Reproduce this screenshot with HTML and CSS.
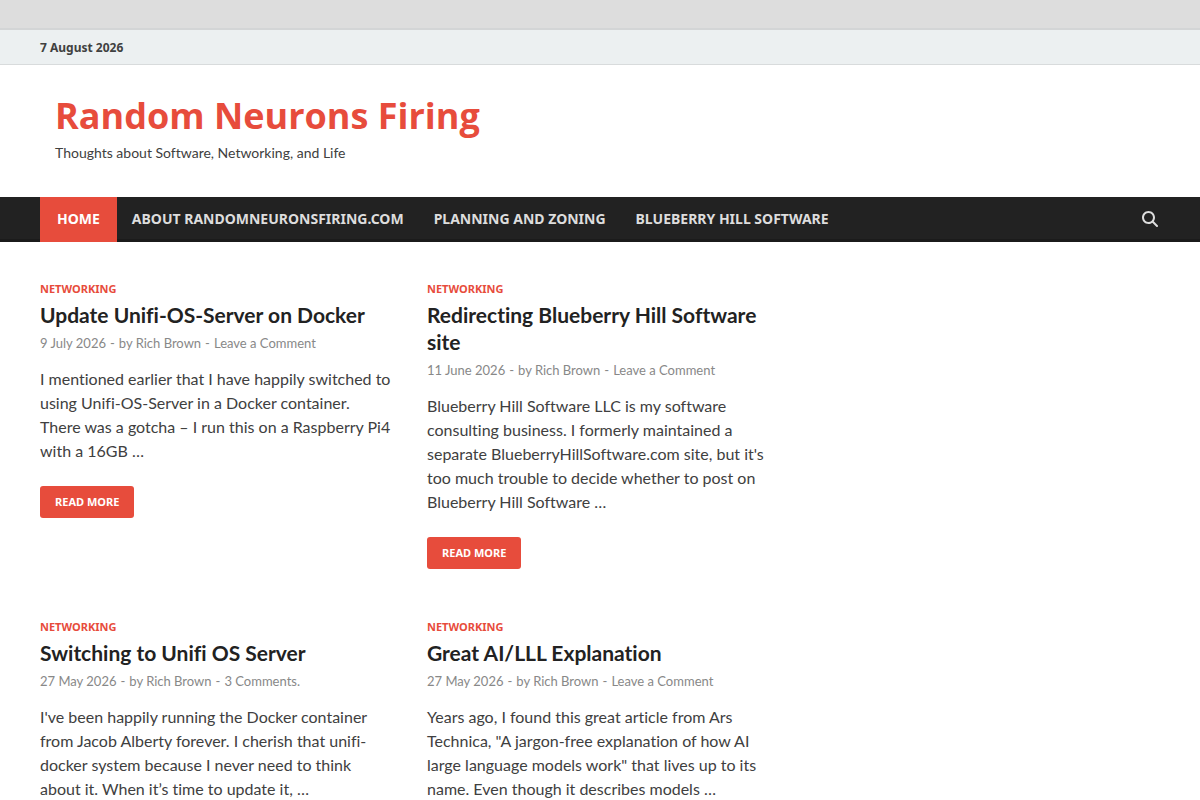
FILE: index.html
```html
<!DOCTYPE html>
<html lang="en">
<head>
<meta charset="utf-8">
<meta name="viewport" content="width=device-width, initial-scale=1">
<title>Random Neurons Firing</title>
<link rel="stylesheet" href="styles.css">
</head>
<body>
<div class="page">
  <div class="top-bar"><div class="container date">7 August 2026</div></div>
  <header class="container site-header">
    <h1 class="site-title"><a href="#">Random Neurons Firing</a></h1>
    <p class="tagline">Thoughts about Software, Networking, and Life</p>
  </header>
  <nav class="main-nav" aria-label="Primary">
    <div class="container nav-row">
      <ul class="menu">
        <li><a class="menu-link current" href="#" aria-current="page">HOME</a></li>
        <li><a class="menu-link" href="#">ABOUT RANDOMNEURONSFIRING.COM</a></li>
        <li><a class="menu-link" href="#">PLANNING AND ZONING</a></li>
        <li><a class="menu-link" href="#">BLUEBERRY HILL SOFTWARE</a></li>
      </ul>
      <button class="search" type="button" aria-label="Search">
        <svg width="16" height="16" viewBox="0 0 512 512" aria-hidden="true"><path fill="currentColor" d="M416 208c0 45.900-14.900 88.300-40 122.700L502.600 457.400c12.500 12.500 12.500 32.800 0 45.300s-32.800 12.500-45.300 0L330.700 376c-34.400 25.200-76.800 40-122.700 40C93.100 416 0 322.900 0 208S93.100 0 208 0S416 93.100 416 208zM208 352a144 144 0 1 0 0-288 144 144 0 1 0 0 288z"/></svg>
      </button>
    </div>
  </nav>
  <main class="container posts">
    <article class="post">
      <a class="category" href="#">NETWORKING</a>
      <h2 class="post-title"><a href="#">Update Unifi-OS-Server on Docker</a></h2>
      <div class="meta"><a href="#">9 July 2026</a><span class="dash">-</span>by <a href="#">Rich Brown</a><span class="dash">-</span><a href="#">Leave a Comment</a></div>
      <p class="summary">I mentioned earlier that I have happily switched to using Unifi-OS-Server in a Docker container. There was a gotcha – I run this on a Raspberry Pi4 with a 16GB …</p>
      <a class="read-more" href="#">READ MORE</a>
    </article>
    <article class="post">
      <a class="category" href="#">NETWORKING</a>
      <h2 class="post-title"><a href="#">Redirecting Blueberry Hill Software site</a></h2>
      <div class="meta"><a href="#">11 June 2026</a><span class="dash">-</span>by <a href="#">Rich Brown</a><span class="dash">-</span><a href="#">Leave a Comment</a></div>
      <p class="summary">Blueberry Hill Software LLC is my software consulting business. I formerly maintained a separate BlueberryHillSoftware.com site, but it's too much trouble to decide whether to post on Blueberry Hill Software …</p>
      <a class="read-more" href="#">READ MORE</a>
    </article>
    <article class="post">
      <a class="category" href="#">NETWORKING</a>
      <h2 class="post-title"><a href="#">Switching to Unifi OS Server</a></h2>
      <div class="meta"><a href="#">27 May 2026</a><span class="dash">-</span>by <a href="#">Rich Brown</a><span class="dash">-</span><a href="#">3 Comments.</a></div>
      <p class="summary">I've been happily running the Docker container from Jacob Alberty forever. I cherish that unifi-docker system because I never need to think about it. When it’s time to update it, …</p>
      <a class="read-more" href="#">READ MORE</a>
    </article>
    <article class="post">
      <a class="category" href="#">NETWORKING</a>
      <h2 class="post-title"><a href="#">Great AI/LLL Explanation</a></h2>
      <div class="meta"><a href="#">27 May 2026</a><span class="dash">-</span>by <a href="#">Rich Brown</a><span class="dash">-</span><a href="#">Leave a Comment</a></div>
      <p class="summary">Years ago, I found this great article from Ars Technica, "A jargon-free explanation of how AI large language models work" that lives up to its name. Even though it describes models …</p>
      <a class="read-more" href="#">READ MORE</a>
    </article>
  </main>
</div>
</body>
</html>
```

FILE: styles.css
```css
* { box-sizing: border-box; }
html { scrollbar-width: none; }
body {
  margin: 0;
  padding-top: 28px;
  background: #ddd;
  color: #404040;
  font: 16px/24px Lato, sans-serif;
  font-variant-ligatures: no-common-ligatures;
}
a { color: inherit; text-decoration: none; }
.page { background: #fff; }
.container { max-width: 1200px; margin: 0 auto; padding: 0 40px; }
.top-bar {
  background: #ecf0f1;
  border-top: 2px solid #d3d5d6;
  border-bottom: 1px solid #d8dbdc;
}
.date { padding-top: 1px; font: bold 12px/33px "Noto Sans", sans-serif; }
.site-header { padding: 30px 55px 32px; }
.site-title {
  margin: 0;
  color: #e74c3c;
  font: bold 36px/42px "Open Sans", sans-serif;
}
.tagline { margin: 4px 0 0; font-size: 14px; }
.main-nav { background: #222; border-bottom: 3px solid #1b1b1b; }
.nav-row { display: flex; justify-content: space-between; align-items: center; }
.menu { display: flex; flex-wrap: wrap; margin: 0 0 -3px; padding: 0; list-style: none; }
.menu-link {
  display: block;
  padding: 0 15px 2px;
  color: #ddd;
  font: bold 14px/43px "Noto Sans", sans-serif;
}
.current { padding: 0 17px 2px; background: #e74c3c; color: #fff; }
.search {
  display: flex;
  margin: 2px 0 0;
  padding: 2px;
  border: 0;
  background: none;
  color: #ddd;
}
.posts {
  display: grid;
  grid-template-columns: 352fr 352fr 346fr;
  gap: 50px 35px;
  padding-top: 39px;
  padding-bottom: 40px;
}
.post:nth-child(odd) { grid-column: 1; }
.post:nth-child(even) { grid-column: 2; }
.category {
  display: block;
  color: #e74c3c;
  font: bold 11px/16px "Noto Sans", sans-serif;
}
.post-title { margin: 4px 0 5px; color: #222; font-size: 21px; line-height: 27px; font-weight: 700; }
.meta { color: #888; font-size: 13px; line-height: 20px; }
.dash { margin: 0 4px; }
.summary { margin: 14px 0 23px; }
.read-more {
  display: inline-block;
  padding: 0 15px;
  border-radius: 3px;
  background: #e74c3c;
  color: #fff;
  font: bold 11px/32px "Noto Sans", sans-serif;
}
```
